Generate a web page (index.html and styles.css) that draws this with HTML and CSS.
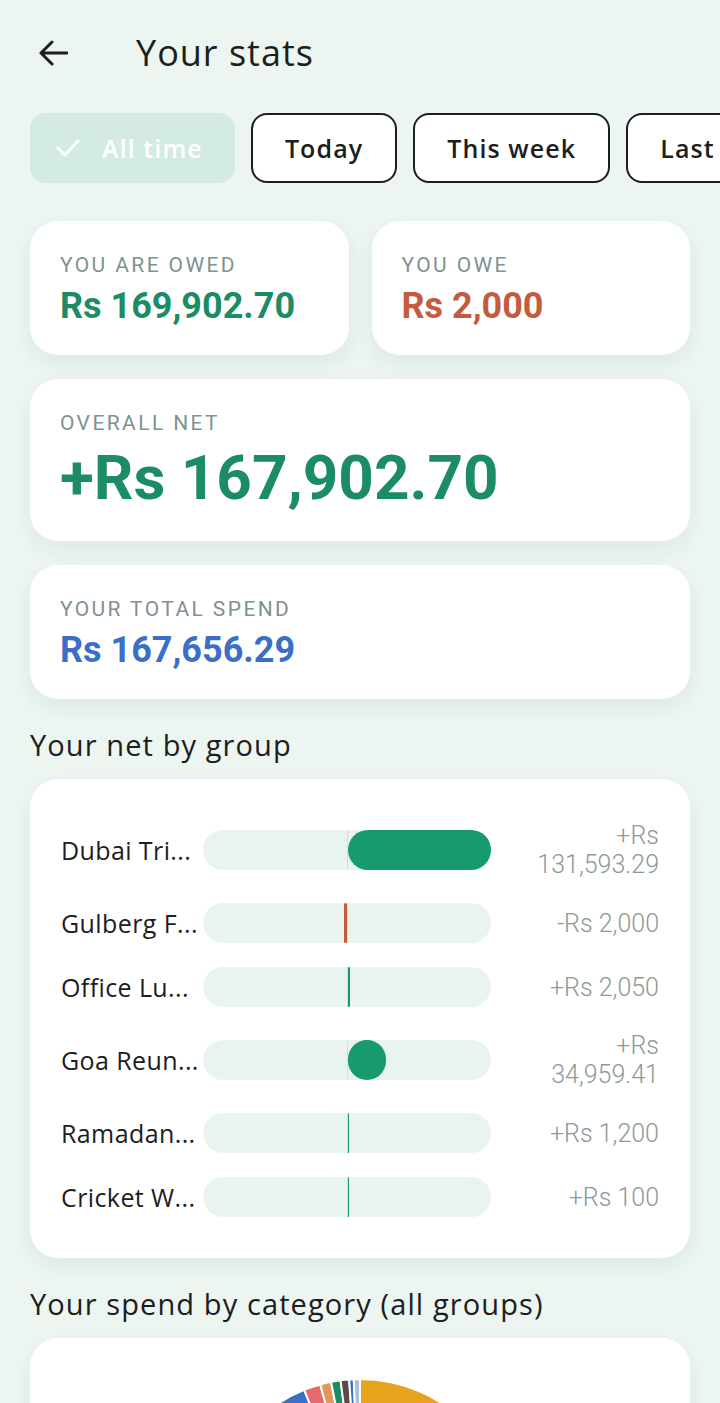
FILE: index.html
```html
<!DOCTYPE html>
<html lang="en">
<head>
    <meta charset="UTF-8">
    <meta name="viewport" content="width=device-width, initial-scale=1.0">
    <title>Your stats</title>
    <link rel="stylesheet" href="styles.css">
</head>
<body>
    <div class="screen">
        <header class="topbar">
            <button class="back-button" aria-label="Back">
                <svg width="30" height="26" viewBox="0 0 30 26">
                    <path d="M29 13H3M14 2L3 13l11 11" fill="none" stroke="#1b201e" stroke-width="3" stroke-linecap="round" stroke-linejoin="round"/>
                </svg>
            </button>
            <h1>Your stats</h1>
        </header>

        <!-- Period filter chips -->
        <div class="chips">
            <button class="chip chip-active">
                <svg width="24" height="18" viewBox="0 0 24 18">
                    <path d="M2 9l7 7L22 2" fill="none" stroke="#ffffff" stroke-width="3" stroke-linecap="round" stroke-linejoin="round"/>
                </svg>
                All time
            </button>
            <button class="chip">Today</button>
            <button class="chip">This week</button>
            <button class="chip">Last month</button>
        </div>

        <div class="stat-row">
            <div class="card stat">
                <div class="stat-label">You are owed</div>
                <div class="stat-value green">Rs 169,902.70</div>
            </div>
            <div class="card stat">
                <div class="stat-label">You owe</div>
                <div class="stat-value red">Rs 2,000</div>
            </div>
        </div>

        <div class="card stat stat-big">
            <div class="stat-label">Overall net</div>
            <div class="stat-value green">+Rs 167,902.70</div>
        </div>

        <div class="card stat">
            <div class="stat-label">Your total spend</div>
            <div class="stat-value blue">Rs 167,656.29</div>
        </div>

        <h2 class="section-title">Your net by group</h2>
        <div class="card groups" id="groupList">
            <!-- Group rows are built below -->
        </div>

        <h2 class="section-title">Your spend by category (all groups)</h2>
        <div class="card pie-card">
            <svg id="pie" width="300" height="300" viewBox="0 0 300 300"></svg>
        </div>
    </div>

    <script>
        // Net per group, names already shortened as the app shows them
        const groups = [
            { name: 'Dubai Tri...', net: 131593.29, label: '+Rs 131,593.29' },
            { name: 'Gulberg F...', net: -2000, label: '-Rs 2,000' },
            { name: 'Office Lu...', net: 2050, label: '+Rs 2,050' },
            { name: 'Goa Reun...', net: 34959.41, label: '+Rs 34,959.41' },
            { name: 'Ramadan...', net: 1200, label: '+Rs 1,200' },
            { name: 'Cricket W...', net: 100, label: '+Rs 100' }
        ];

        const groupList = document.getElementById('groupList');
        const maxNet = Math.max(...groups.map(g => Math.abs(g.net)));

        groups.forEach(g => {
            const row = document.createElement('div');
            row.className = 'group-row';

            const name = document.createElement('div');
            name.className = 'group-name';
            name.textContent = g.name;

            const track = document.createElement('div');
            track.className = 'track';
            const negHalf = document.createElement('div');
            negHalf.className = 'half half-neg';
            const posHalf = document.createElement('div');
            posHalf.className = 'half half-pos';

            const fill = document.createElement('div');
            fill.className = 'fill ' + (g.net < 0 ? 'fill-neg' : 'fill-pos');
            fill.style.width = (Math.abs(g.net) / maxNet * 100) + '%';
            (g.net < 0 ? negHalf : posHalf).appendChild(fill);

            track.appendChild(negHalf);
            track.appendChild(posHalf);

            const amount = document.createElement('div');
            amount.className = 'group-amount';
            amount.textContent = g.label;

            row.appendChild(name);
            row.appendChild(track);
            row.appendChild(amount);
            groupList.appendChild(row);
        });

        // Spend by category, in degrees, clockwise from the top
        const slices = [
            { deg: 196, color: '#e8a31d' },
            { deg: 44, color: '#8e6bbf' },
            { deg: 50, color: '#2aa198' },
            { deg: 37, color: '#9aa5a0' },
            { deg: 11, color: '#3b6fc6' },
            { deg: 6.5, color: '#e46a6e' },
            { deg: 4.3, color: '#dc9a5c' },
            { deg: 3.7, color: '#1b8c66' },
            { deg: 3.3, color: '#5c4a44' },
            { deg: 1.8, color: '#3b6fc6' },
            { deg: 2.4, color: '#a9bfe0' }
        ];

        const pie = document.getElementById('pie');
        const cx = 150, cy = 150, r = 149;

        function point(deg) {
            const a = (deg - 90) * Math.PI / 180;
            return [cx + r * Math.cos(a), cy + r * Math.sin(a)];
        }

        let start = 0;
        slices.forEach(s => {
            const end = start + s.deg;
            const [x1, y1] = point(start);
            const [x2, y2] = point(end);
            const large = s.deg > 180 ? 1 : 0;
            const path = document.createElementNS('http://www.w3.org/2000/svg', 'path');
            path.setAttribute('d', `M${cx} ${cy} L${x1} ${y1} A${r} ${r} 0 ${large} 1 ${x2} ${y2} Z`);
            path.setAttribute('fill', s.color);
            path.setAttribute('stroke', '#ffffff');
            path.setAttribute('stroke-width', '2');
            pie.appendChild(path);
            start = end;
        });
    </script>
</body>
</html>
```

FILE: styles.css
```css
* {
    box-sizing: border-box;
}

body {
    margin: 0;
    background-color: #ecf5f0;
    color: #1b201e;
    font-family: "Open Sans", sans-serif;
}

.screen {
    padding: 0 30px 40px;
}

/* Header */
.topbar {
    display: flex;
    align-items: center;
    gap: 68px;
    height: 106px;
    padding-left: 8px;
}

.back-button {
    display: flex;
    padding: 0;
    border: none;
    background: none;
}

.topbar h1 {
    margin: 0;
    font-size: 36px;
    font-weight: 500;
    line-height: 44px;
    letter-spacing: 1px;
}

/* Filter chips */
.chips {
    display: flex;
    gap: 16px;
    margin: 7px -30px 0 0;
    overflow: hidden;
}

.chip {
    flex: none;
    display: flex;
    align-items: center;
    gap: 22px;
    height: 70px;
    padding: 0 32px;
    border: 2px solid #1b1f1e;
    border-radius: 16px;
    background-color: #ffffff;
    color: #1b201e;
    font-family: "Open Sans", sans-serif;
    font-size: 25px;
    font-weight: 600;
    letter-spacing: 1.1px;
}

.chip-active {
    padding: 0 30px 0 24px;
    border-color: #d3ebe2;
    background-color: #d3ebe2;
    color: #ffffff;
}

/* Stat cards */
.card {
    background-color: #ffffff;
    border-radius: 28px;
    box-shadow: 0 8px 20px rgba(40, 80, 60, 0.07);
}

.stat-row {
    display: grid;
    grid-template-columns: 1fr 1fr;
    gap: 23px;
    margin-top: 38px;
}

.stat {
    padding: 32px 30px 29px;
}

.screen > .stat {
    margin-top: 24px;
}

.stat-label {
    font-family: Roboto, sans-serif;
    font-size: 21px;
    line-height: 24px;
    letter-spacing: 2.4px;
    text-transform: uppercase;
    color: #7f928b;
}

.stat-value {
    margin-top: 9px;
    font-family: Roboto, sans-serif;
    font-size: 36px;
    font-weight: 700;
    line-height: 40px;
}

.stat-big {
    padding-bottom: 27px;
}

.stat-big .stat-value {
    margin-top: 7px;
    font-size: 62px;
    line-height: 72px;
}

.green {
    color: #1b8c66;
}

.red {
    color: #c65a3d;
}

.blue {
    color: #3b6fc6;
}

/* Sections */
.section-title {
    margin: 28px 0 16px;
    font-size: 29px;
    font-weight: 400;
    line-height: 36px;
    letter-spacing: 1.1px;
}

/* Net by group */
.groups {
    display: flex;
    flex-direction: column;
    gap: 24px;
    padding: 42px 31px 41px;
}

.group-row {
    display: grid;
    grid-template-columns: 142px 288px 1fr;
    align-items: center;
}

.group-name {
    font-size: 25px;
    letter-spacing: 0.4px;
    white-space: nowrap;
    overflow: hidden;
}

.track {
    display: flex;
    height: 40px;
    border-radius: 20px;
    background-color: #eaf4ef;
}

.half {
    flex: 1;
    display: flex;
}

.half-neg {
    justify-content: flex-end;
}

.half-pos {
    border-left: 1px solid #cfe3d9;
}

.fill {
    height: 100%;
    border-radius: 20px;
}

.fill-pos {
    background-color: #169a6e;
}

.fill-neg {
    background-color: #c9573a;
}

.group-amount {
    justify-self: end;
    max-width: 135px;
    text-align: right;
    font-family: Roboto, sans-serif;
    font-size: 25px;
    font-weight: 300;
    line-height: 29px;
    color: #8b9b95;
}

/* Spend by category */
.pie-card {
    display: flex;
    justify-content: center;
    padding: 40px 0;
}
```
